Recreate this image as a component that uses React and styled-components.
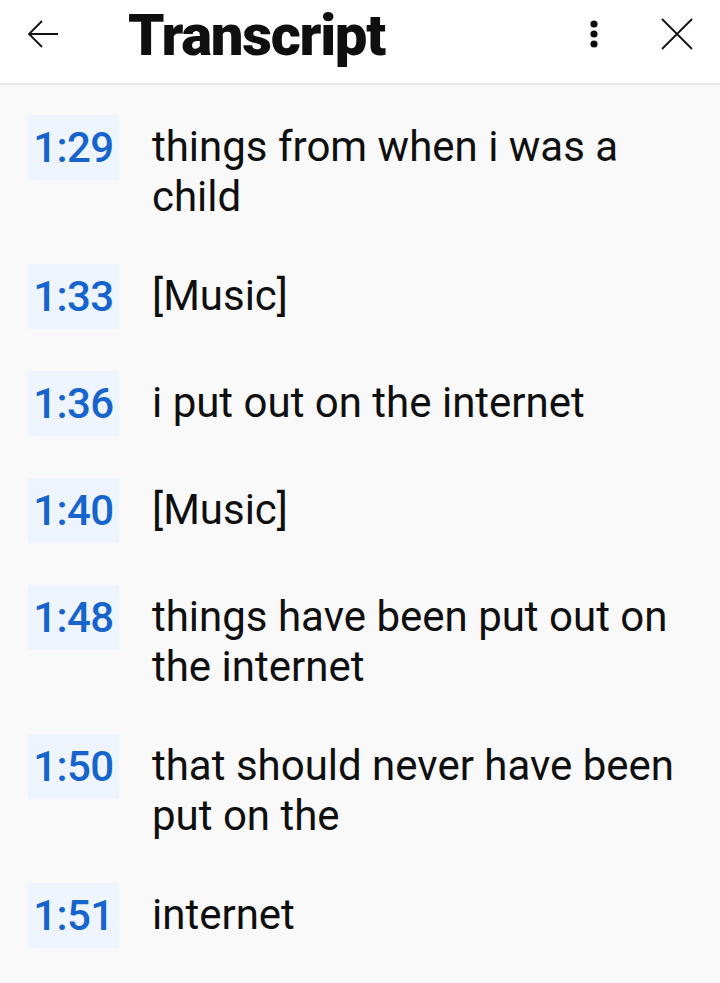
import React from "react";
import styled, { createGlobalStyle } from "styled-components";

const Global = createGlobalStyle`
  html, body {
    margin: 0;
    padding: 0;
    background: #f9f9f9;
  }
  body {
    font-family: Roboto, "Liberation Sans", sans-serif;
  }
`;

const Page = styled.div`
  width: 720px;
  height: 983px;
  overflow: hidden;
  background: #f9f9f9;
`;

const Header = styled.header`
  height: 83px;
  display: flex;
  align-items: center;
  background: #fff;
  border-bottom: 2px solid #e8e8e8;
  padding: 0 24px;
`;

const IconButton = styled.div`
  width: 38px;
  height: 38px;
  display: flex;
  align-items: center;
  justify-content: center;
  margin-top: -16px;
  margin-left: ${p => p.$gap || 0}px;
`;

const Title = styled.h1`
  flex: 1;
  margin: -14px 0 0 66px;
  font-family: Roboto, sans-serif;
  font-weight: 900;
  font-size: 58px;
  letter-spacing: -1.3px;
  color: #0f0f0f;
`;

const List = styled.ul`
  list-style: none;
  margin: 0;
  padding: 30px 0 0 28px;
`;

const Row = styled.li`
  display: flex;
  align-items: flex-start;
  margin-bottom: 42px;
`;

const Stamp = styled.span`
  flex: none;
  width: 91px;
  height: 65px;
  display: flex;
  align-items: center;
  justify-content: center;
  background: #eef5fe;
  color: #1765cc;
  font-weight: 500;
  font-size: 42px;
  letter-spacing: -0.6px;
`;

const Text = styled.span`
  margin: 7px 30px 0 33px;
  font-size: 42px;
  line-height: 50px;
  color: #0f0f0f;
`;

const lines = [
  ["1:29", "things from when i was a child"],
  ["1:33", "[Music]"],
  ["1:36", "i put out on the internet"],
  ["1:40", "[Music]"],
  ["1:48", "things have been put out on the internet"],
  ["1:50", "that should never have been put on the"],
  ["1:51", "internet"],
];

export default function App() {
  return (
    <Page>
      <Global />
      <Header>
        <IconButton>
          <svg width="34" height="30" viewBox="0 0 34 30" fill="none" stroke="#0f0f0f" strokeWidth="1.8">
            <path d="M32 15H3M16 2L3 15l13 13" />
          </svg>
        </IconButton>
        <Title>Transcript</Title>
        <IconButton>
          <svg width="10" height="30" viewBox="0 0 10 30" fill="#0f0f0f">
            <circle cx="5" cy="5" r="3.6" />
            <circle cx="5" cy="15" r="3.6" />
            <circle cx="5" cy="25" r="3.6" />
          </svg>
        </IconButton>
        <IconButton $gap={45}>
          <svg width="34" height="34" viewBox="0 0 34 34" fill="none" stroke="#0f0f0f" strokeWidth="1.8">
            <path d="M2 2L32 32M32 2L2 32" />
          </svg>
        </IconButton>
      </Header>
      <List>
        {lines.map(([t, s]) => (
          <Row key={t}>
            <Stamp>{t}</Stamp>
            <Text>{s}</Text>
          </Row>
        ))}
      </List>
    </Page>
  );
}
